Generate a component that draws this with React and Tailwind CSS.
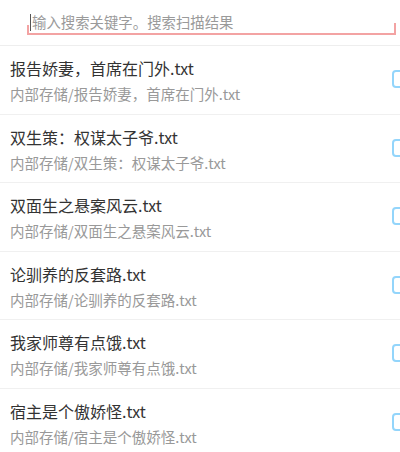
import React from "react";

const files = [
  "报告娇妻，首席在门外.txt",
  "双生策：权谋太子爷.txt",
  "双面生之悬案风云.txt",
  "论驯养的反套路.txt",
  "我家师尊有点饿.txt",
  "宿主是个傲娇怪.txt",
];

export default function App() {
  return (
    <div
      className="w-[400px] h-[452px] overflow-hidden bg-white"
      style={{ fontFamily: '"Noto Sans CJK SC", "Noto Sans", sans-serif' }}
    >
      {/* search */}
      <div className="h-[46px] border-b border-[#eeeeee] pt-[11px] pl-[27px] pr-[4px]">
        <div className="relative h-[24px] border-b-2 border-[#f3a3a3] flex items-center">
          <span className="absolute left-0 bottom-0 w-[2px] h-[8px] bg-[#f3a3a3]" />
          <span className="absolute right-0 bottom-0 w-[2px] h-[10px] bg-[#f3a3a3]" />
          <span className="w-px h-[17px] bg-[#555] ml-[3px]" />
          <span className="text-[14.4px] leading-none text-[#9a9a9a] ml-[1px]">
            输入搜索关键字。搜索扫描结果
          </span>
        </div>
      </div>

      {files.map((f) => (
        <div
          key={f}
          className="h-[68.6px] border-b border-[#f0f0f0] flex items-start justify-between overflow-hidden"
        >
          <div className="pl-[10px] pt-[12px]">
            <div className="text-[16px] leading-[20px] text-[#333333]">{f}</div>
            <div className="text-[14.5px] leading-[18px] text-[#999999] mt-[7px]">
              内部存储/{f}
            </div>
          </div>
          <div className="w-[18px] h-[18px] shrink-0 mt-[24px] border-2 border-[#93d5fb] rounded-[4px] mr-[-10px]" />
        </div>
      ))}
    </div>
  );
}
